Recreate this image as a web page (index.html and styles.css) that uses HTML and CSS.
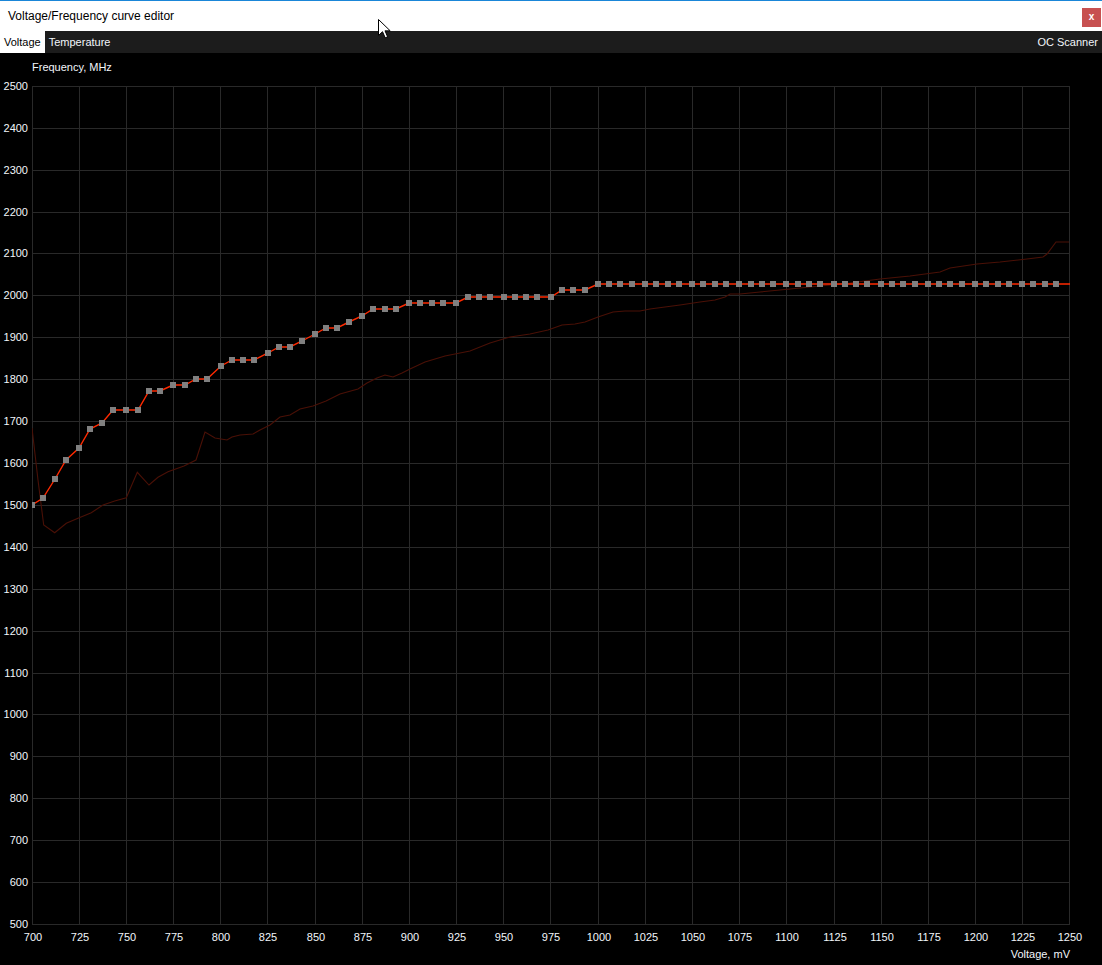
FILE: index.html
```html
<!DOCTYPE html>
<html lang="en">
<head>
<meta charset="utf-8">
<title>Voltage/Frequency curve editor</title>
<link rel="stylesheet" href="styles.css">
</head>
<body>
<div class="window">
  <div class="titlebar">
    <span class="title">Voltage/Frequency curve editor</span>
    <span class="close">x</span>
  </div>
  <div class="tabs">
    <span class="tab active">Voltage</span>
    <span class="tab">Temperature</span>
    <span class="spacer"></span>
    <span class="tab">OC Scanner</span>
  </div>
  <div class="chart">
    <svg class="plot" width="1102" height="912" viewBox="0 53 1102 912" xmlns="http://www.w3.org/2000/svg">
      <defs>
        <clipPath id="area"><rect x="32" y="80" width="1038" height="845"/></clipPath>
      </defs>
      <g class="grid" shape-rendering="crispEdges">
        <path d="M32.5 86V924.5M79.5 86V924.5M126.5 86V924.5M173.5 86V924.5M220.5 86V924.5M267.5 86V924.5M315.5 86V924.5M362.5 86V924.5M409.5 86V924.5M456.5 86V924.5M503.5 86V924.5M550.5 86V924.5M598.5 86V924.5M645.5 86V924.5M692.5 86V924.5M739.5 86V924.5M786.5 86V924.5M834.5 86V924.5M881.5 86V924.5M928.5 86V924.5M975.5 86V924.5M1022.5 86V924.5M1069.5 86V924.5"/>
        <path d="M32 924.5H1070M32 882.5H1070M32 840.5H1070M32 798.5H1070M32 756.5H1070M32 714.5H1070M32 673.5H1070M32 631.5H1070M32 589.5H1070M32 547.5H1070M32 505.5H1070M32 463.5H1070M32 421.5H1070M32 379.5H1070M32 337.5H1070M32 295.5H1070M32 253.5H1070M32 212.5H1070M32 170.5H1070M32 128.5H1070M32 86.5H1070"/>
      </g>
      <g clip-path="url(#area)">
        <polyline class="base" points="32,428 38,480 43.7,525 54.7,532.7 66.3,523.3 78,518.3 91.3,512.7 103,505 114.7,501 126.3,497.7 137.3,472.3 149,485 158,477.3 168,471.7 184,466 196,460 205,432 215,438 227,440 232,437 240,435 253,434 260,430 270,425 280,417 290,415 300,409 313,406 326,401 340,394 358,389 367,383 377,378 385,375 393,377 402,373 410,369 425,362 445,356 470,351 490,343 510,337 530,334 548,330 562,325 575,324 585,322 598,317 613,312 625,311 640,311 650,309 665,307 680,305 700,302 715,300 725,297 730,294 740,294 760,292 790,289 820,286 850,283 880,279 910,276 940,272 950,268 977,264 1000,262 1027,259 1043,257 1047,254 1056,242 1069,242"/>
        <polyline class="curve" points="32,505 43,498 55,479 66,460 79,448 90,429 102,423 113,410 126,410 138,410 149,391 160,391 173,385 185,385 196,379 207,379 221,366 232,360 243,360 254,360 268,353 279,347 290,347 302,341 315,334 326,328 337,328 349,322 362,316 373,309 385,309 396,309 409,303 420,303 432,303 443,303 456,303 468,297 479,297 490,297 504,297 515,297 526,297 537,297 551,297 562,290 573,290 585,290 598,284 1070,284"/>
        <g class="pts" shape-rendering="crispEdges">
          <rect x="29" y="502" width="6" height="6"/><rect x="40" y="495" width="6" height="6"/><rect x="52" y="476" width="6" height="6"/><rect x="63" y="457" width="6" height="6"/>
          <rect x="76" y="445" width="6" height="6"/><rect x="87" y="426" width="6" height="6"/><rect x="99" y="420" width="6" height="6"/><rect x="110" y="407" width="6" height="6"/>
          <rect x="123" y="407" width="6" height="6"/><rect x="135" y="407" width="6" height="6"/><rect x="146" y="388" width="6" height="6"/><rect x="157" y="388" width="6" height="6"/>
          <rect x="170" y="382" width="6" height="6"/><rect x="182" y="382" width="6" height="6"/><rect x="193" y="376" width="6" height="6"/><rect x="204" y="376" width="6" height="6"/>
          <rect x="218" y="363" width="6" height="6"/><rect x="229" y="357" width="6" height="6"/><rect x="240" y="357" width="6" height="6"/><rect x="251" y="357" width="6" height="6"/>
          <rect x="265" y="350" width="6" height="6"/><rect x="276" y="344" width="6" height="6"/><rect x="287" y="344" width="6" height="6"/><rect x="299" y="338" width="6" height="6"/>
          <rect x="312" y="331" width="6" height="6"/><rect x="323" y="325" width="6" height="6"/><rect x="334" y="325" width="6" height="6"/><rect x="346" y="319" width="6" height="6"/>
          <rect x="359" y="313" width="6" height="6"/><rect x="370" y="306" width="6" height="6"/><rect x="382" y="306" width="6" height="6"/><rect x="393" y="306" width="6" height="6"/>
          <rect x="406" y="300" width="6" height="6"/><rect x="417" y="300" width="6" height="6"/><rect x="429" y="300" width="6" height="6"/><rect x="440" y="300" width="6" height="6"/>
          <rect x="453" y="300" width="6" height="6"/><rect x="465" y="294" width="6" height="6"/><rect x="476" y="294" width="6" height="6"/><rect x="487" y="294" width="6" height="6"/>
          <rect x="501" y="294" width="6" height="6"/><rect x="512" y="294" width="6" height="6"/><rect x="523" y="294" width="6" height="6"/><rect x="534" y="294" width="6" height="6"/>
          <rect x="548" y="294" width="6" height="6"/><rect x="559" y="287" width="6" height="6"/><rect x="570" y="287" width="6" height="6"/><rect x="582" y="287" width="6" height="6"/>
          <rect x="595" y="281" width="6" height="6"/><rect x="606" y="281" width="6" height="6"/><rect x="617" y="281" width="6" height="6"/><rect x="629" y="281" width="6" height="6"/>
          <rect x="642" y="281" width="6" height="6"/><rect x="653" y="281" width="6" height="6"/><rect x="665" y="281" width="6" height="6"/><rect x="676" y="281" width="6" height="6"/>
          <rect x="689" y="281" width="6" height="6"/><rect x="700" y="281" width="6" height="6"/><rect x="712" y="281" width="6" height="6"/><rect x="723" y="281" width="6" height="6"/>
          <rect x="736" y="281" width="6" height="6"/><rect x="748" y="281" width="6" height="6"/><rect x="759" y="281" width="6" height="6"/><rect x="770" y="281" width="6" height="6"/>
          <rect x="783" y="281" width="6" height="6"/><rect x="795" y="281" width="6" height="6"/><rect x="806" y="281" width="6" height="6"/><rect x="817" y="281" width="6" height="6"/>
          <rect x="831" y="281" width="6" height="6"/><rect x="842" y="281" width="6" height="6"/><rect x="853" y="281" width="6" height="6"/><rect x="864" y="281" width="6" height="6"/>
          <rect x="878" y="281" width="6" height="6"/><rect x="889" y="281" width="6" height="6"/><rect x="900" y="281" width="6" height="6"/><rect x="912" y="281" width="6" height="6"/>
          <rect x="925" y="281" width="6" height="6"/><rect x="936" y="281" width="6" height="6"/><rect x="947" y="281" width="6" height="6"/><rect x="959" y="281" width="6" height="6"/>
          <rect x="972" y="281" width="6" height="6"/><rect x="983" y="281" width="6" height="6"/><rect x="995" y="281" width="6" height="6"/><rect x="1006" y="281" width="6" height="6"/>
          <rect x="1019" y="281" width="6" height="6"/><rect x="1030" y="281" width="6" height="6"/><rect x="1042" y="281" width="6" height="6"/><rect x="1053" y="281" width="6" height="6"/>
        </g>
      </g>
      <g class="labels">
        <text class="axis-title" x="32" y="71">Frequency, MHz</text>
        <g class="ylab">
          <text x="28" y="90">2500</text><text x="28" y="132">2400</text><text x="28" y="174">2300</text><text x="28" y="216">2200</text>
          <text x="28" y="257">2100</text><text x="28" y="299">2000</text><text x="28" y="341">1900</text><text x="28" y="383">1800</text>
          <text x="28" y="425">1700</text><text x="28" y="467">1600</text><text x="28" y="509">1500</text><text x="28" y="551">1400</text>
          <text x="28" y="593">1300</text><text x="28" y="635">1200</text><text x="28" y="677">1100</text><text x="28" y="718">1000</text>
          <text x="28" y="760">900</text><text x="28" y="802">800</text><text x="28" y="844">700</text><text x="28" y="886">600</text>
          <text x="28" y="928">500</text>
        </g>
        <g class="xlab">
          <text x="33" y="941">700</text><text x="80" y="941">725</text><text x="127" y="941">750</text><text x="174" y="941">775</text>
          <text x="221" y="941">800</text><text x="268" y="941">825</text><text x="316" y="941">850</text><text x="363" y="941">875</text>
          <text x="410" y="941">900</text><text x="457" y="941">925</text><text x="504" y="941">950</text><text x="551" y="941">975</text>
          <text x="599" y="941">1000</text><text x="646" y="941">1025</text><text x="693" y="941">1050</text><text x="740" y="941">1075</text>
          <text x="787" y="941">1100</text><text x="835" y="941">1125</text><text x="882" y="941">1150</text><text x="929" y="941">1175</text>
          <text x="976" y="941">1200</text><text x="1023" y="941">1225</text><text x="1070" y="941">1250</text>
        </g>
        <text class="axis-title end" x="1070" y="958">Voltage, mV</text>
      </g>
    </svg>
  </div>
</div>
<svg class="cursor" width="13" height="20" viewBox="0 0 13 20" xmlns="http://www.w3.org/2000/svg">
  <path d="M0.5 0.5V16.5L4.5 12.7L7.2 18.8L9.6 17.8L7 11.8H12.2Z" fill="#fff" stroke="#000" stroke-width="1" stroke-linejoin="miter"/>
</svg>
</body>
</html>
```

FILE: styles.css
```css
html, body {
  margin: 0;
  padding: 0;
  background: #000;
}

body {
  width: 1102px;
  height: 965px;
  overflow: hidden;
  position: relative;
  font-family: "Liberation Sans", Arial, sans-serif;
}

.window {
  display: flex;
  flex-direction: column;
  width: 1102px;
  height: 965px;
}

.titlebar {
  display: flex;
  align-items: center;
  height: 30px;
  border-top: 1px solid #1a86d8;
  background: #fff;
  padding-left: 8px;
  box-sizing: content-box;
}

.title {
  font-size: 12px;
  color: #000;
}

.close {
  margin-left: auto;
  margin-right: 1px;
  align-self: flex-start;
  margin-top: 7px;
  width: 19px;
  height: 19px;
  background: #c75050;
  color: #fff;
  font-size: 10px;
  font-weight: bold;
  display: flex;
  align-items: center;
  justify-content: center;
  line-height: 1;
  padding-bottom: 1px;
  box-sizing: border-box;
}

.tabs {
  display: flex;
  align-items: stretch;
  height: 22px;
  background: #1c1c1c;
  font-size: 11px;
  color: #f2f6fa;
}

.tab {
  display: flex;
  align-items: center;
  padding: 0 4px;
}

.tab.active {
  background: #fff;
  color: #000;
}

.spacer {
  flex: 1;
}

.chart {
  flex: 1;
  background: #000;
}

.plot {
  display: block;
}

.grid path {
  stroke: #292929;
  stroke-width: 1;
  fill: none;
}

.base {
  fill: none;
  stroke: #4a1006;
  stroke-width: 1.1;
}

.curve {
  fill: none;
  stroke: #ff2a00;
  stroke-width: 1.4;
}

.pts rect {
  fill: #808080;
}

.labels text {
  font-family: "Liberation Sans", Arial, sans-serif;
  font-size: 11px;
  fill: #f2f6fb;
}

.ylab text {
  text-anchor: end;
}

.xlab text {
  text-anchor: middle;
}

.labels text.end {
  text-anchor: end;
}

.cursor {
  position: absolute;
  left: 378px;
  top: 19px;
}
```
